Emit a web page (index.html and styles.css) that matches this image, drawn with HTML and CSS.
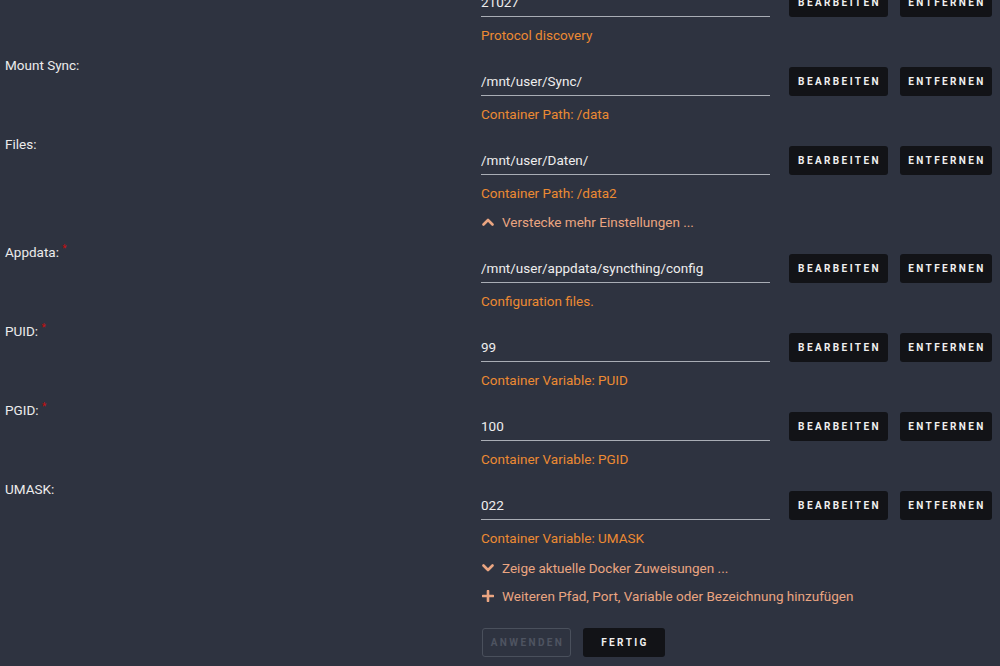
FILE: index.html
```html
<!DOCTYPE html>
<html lang="de">

<head>
    <meta charset="UTF-8">
    <meta name="viewport" content="width=device-width, initial-scale=1.0">
    <title>Update Container</title>
    <link rel="stylesheet" href="styles.css">
</head>

<body>
    <div class="form">

        <div class="row">
            <div class="label"></div>
            <div class="field">
                <div class="line">
                    <input class="value" type="text" value="21027">
                    <button class="btn">Bearbeiten</button>
                    <button class="btn">Entfernen</button>
                </div>
                <div class="desc">Protocol discovery</div>
            </div>
        </div>

        <div class="row">
            <div class="label">Mount Sync:</div>
            <div class="field">
                <div class="line">
                    <input class="value" type="text" value="/mnt/user/Sync/">
                    <button class="btn">Bearbeiten</button>
                    <button class="btn">Entfernen</button>
                </div>
                <div class="desc">Container Path: /data</div>
            </div>
        </div>

        <div class="row">
            <div class="label">Files:</div>
            <div class="field">
                <div class="line">
                    <input class="value" type="text" value="/mnt/user/Daten/">
                    <button class="btn">Bearbeiten</button>
                    <button class="btn">Entfernen</button>
                </div>
                <div class="desc">Container Path: /data2</div>
            </div>
        </div>

        <div class="toggle first">
            <svg viewBox="0 0 12 12" width="12" height="12"><path d="M1.5 8.5 L6 4 L10.5 8.5" fill="none" stroke="currentColor" stroke-width="2.6" stroke-linecap="round" stroke-linejoin="round"/></svg>
            <span>Verstecke mehr Einstellungen ...</span>
        </div>

        <div class="row">
            <div class="label">Appdata: <sup class="req">*</sup></div>
            <div class="field">
                <div class="line">
                    <input class="value" type="text" value="/mnt/user/appdata/syncthing/config">
                    <button class="btn">Bearbeiten</button>
                    <button class="btn">Entfernen</button>
                </div>
                <div class="desc">Configuration files.</div>
            </div>
        </div>

        <div class="row">
            <div class="label">PUID: <sup class="req">*</sup></div>
            <div class="field">
                <div class="line">
                    <input class="value" type="text" value="99">
                    <button class="btn">Bearbeiten</button>
                    <button class="btn">Entfernen</button>
                </div>
                <div class="desc">Container Variable: PUID</div>
            </div>
        </div>

        <div class="row">
            <div class="label">PGID: <sup class="req">*</sup></div>
            <div class="field">
                <div class="line">
                    <input class="value" type="text" value="100">
                    <button class="btn">Bearbeiten</button>
                    <button class="btn">Entfernen</button>
                </div>
                <div class="desc">Container Variable: PGID</div>
            </div>
        </div>

        <div class="row">
            <div class="label">UMASK:</div>
            <div class="field">
                <div class="line">
                    <input class="value" type="text" value="022">
                    <button class="btn">Bearbeiten</button>
                    <button class="btn">Entfernen</button>
                </div>
                <div class="desc">Container Variable: UMASK</div>
            </div>
        </div>

        <div class="actions">
            <div class="toggle">
                <svg viewBox="0 0 12 12" width="12" height="12"><path d="M1.5 3.5 L6 8 L10.5 3.5" fill="none" stroke="currentColor" stroke-width="2.6" stroke-linecap="round" stroke-linejoin="round"/></svg>
                <span>Zeige aktuelle Docker Zuweisungen ...</span>
            </div>
            <div class="toggle">
                <svg viewBox="0 0 12 12" width="12" height="12"><path d="M6 1 V11 M1 6 H11" fill="none" stroke="currentColor" stroke-width="2.6" stroke-linecap="round"/></svg>
                <span>Weiteren Pfad, Port, Variable oder Bezeichnung hinzufügen</span>
            </div>
            <div class="buttons">
                <button class="btn disabled">Anwenden</button>
                <button class="btn">Fertig</button>
            </div>
        </div>

    </div>
</body>

</html>
```

FILE: styles.css
```css
body {
    margin: 0;
    background-color: #2e3340;
    font-family: Roboto, 'Liberation Sans', sans-serif;
    font-size: 13.5px;
    color: #e6e6e6;
    overflow: hidden;
}

.form {
    margin-top: -22px;
}

.row {
    display: grid;
    grid-template-columns: 481px 1fr;
    margin-bottom: 13px;
}

.label {
    padding-left: 5px;
    line-height: 16px;
    color: #ececec;
}

.req {
    color: #c80e0e;
    font-size: 10px;
    vertical-align: top;
    line-height: 10px;
}

.field {
    padding-top: 10px;
}

.line {
    display: flex;
    align-items: center;
}

.value {
    width: 289px;
    height: 29px;
    box-sizing: border-box;
    padding: 0;
    margin: 0 19px 0 0;
    background: transparent;
    border: none;
    border-bottom: 1px solid #a9adb5;
    color: #eeeeee;
    font-family: Roboto, 'Liberation Sans', sans-serif;
    font-size: 13.5px;
    outline: none;
}

.btn {
    height: 29px;
    padding: 0;
    margin-right: 12px;
    background-color: #121317;
    border: none;
    border-radius: 3px;
    color: #f0f0f0;
    font-family: Roboto, 'Liberation Sans', sans-serif;
    font-size: 10px;
    font-weight: bold;
    letter-spacing: 2.4px;
    text-indent: 2px;
    text-transform: uppercase;
    cursor: pointer;
}

.btn:first-of-type {
    width: 99px;
}

.line .btn:last-child {
    width: 92px;
}

.desc {
    margin-top: 9px;
    line-height: 18px;
    color: #ec8a33;
}

.toggle {
    display: flex;
    align-items: center;
    gap: 8px;
    margin-left: 482px;
    line-height: 18px;
    color: #eaa581;
}

.toggle.first {
    margin-top: -2px;
    margin-bottom: 13px;
}

.actions {
    margin-top: -1px;
}

.actions .toggle {
    margin-bottom: 10px;
}

.buttons {
    display: flex;
    margin-left: 482px;
    margin-top: 23px;
}

.buttons .btn:first-child {
    width: 89px;
}

.buttons .btn:last-child {
    width: 82px;
}

.btn.disabled {
    background: transparent;
    border: 1px solid #4a505c;
    color: #4e5461;
    cursor: default;
}
```
